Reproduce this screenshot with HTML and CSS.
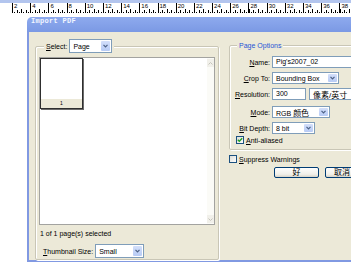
FILE: index.html
```html
<!DOCTYPE html>
<html lang="en">
<head>
    <meta charset="UTF-8">
    <title>Import PDF</title>
    <link rel="stylesheet" href="styles.css">
</head>
<body>
<div class="topbar"></div>
<div class="ruler">
    <span>2</span><span>4</span><span>6</span><span>8</span><span>10</span>
    <span>12</span><span>14</span><span>16</span><span>18</span><span>20</span>
    <span>22</span><span>24</span><span>26</span><span>28</span><span>30</span>
    <span>32</span><span>34</span><span>36</span><span>38</span>
</div>

<div class="stage">
<div class="dialog">
    <div class="titlebar">Import PDF</div>
    <div class="dialog-body">

        <fieldset class="group group-pages">
            <legend class="select-legend">
                <span><u>S</u>elect:</span>
                <div class="combo tall w-page">
                    <span class="combo-text">Page</span>
                    <span class="combo-btn"><svg width="5" height="4" viewBox="0 0 5 4"><path d="M0.5 0.8 L2.5 2.8 L4.5 0.8" fill="none" stroke="#4d6185" stroke-width="1.2"/></svg></span>
                </div>
            </legend>

            <div class="thumbs">
                <div class="thumb-area">
                    <div class="thumb">
                        <div class="thumb-page"></div>
                        <div class="thumb-num">1</div>
                    </div>
                </div>
                <div class="scrollbar">
                    <span class="scroll-btn"><svg width="5" height="3" viewBox="0 0 5 3"><path d="M0.5 2.5 L2.5 0.5 L4.5 2.5" fill="none" stroke="#c4c3ba" stroke-width="1"/></svg></span>
                    <span class="scroll-btn"><svg width="5" height="3" viewBox="0 0 5 3"><path d="M0.5 0.5 L2.5 2.5 L4.5 0.5" fill="none" stroke="#c4c3ba" stroke-width="1"/></svg></span>
                </div>
            </div>

            <p class="status">1 of 1 page(s) selected</p>

            <div class="size-row">
                <span><u>T</u>humbnail Size:</span>
                <div class="combo tall w-size">
                    <span class="combo-text">Small</span>
                    <span class="combo-btn"><svg width="5" height="4" viewBox="0 0 5 4"><path d="M0.5 0.8 L2.5 2.8 L4.5 0.8" fill="none" stroke="#4d6185" stroke-width="1.2"/></svg></span>
                </div>
            </div>
        </fieldset>

        <div class="right-col">
            <fieldset class="group group-opts">
                <legend class="opts-legend">Page Options</legend>

                <div class="opt-row">
                    <span class="opt-label"><u>N</u>ame:</span>
                    <div class="field w-name">Pig's2007_02</div>
                </div>
                <div class="opt-row">
                    <span class="opt-label"><u>C</u>rop To:</span>
                    <div class="combo w-crop">
                        <span class="combo-text">Bounding Box</span>
                        <span class="combo-btn"><svg width="5" height="4" viewBox="0 0 5 4"><path d="M0.5 0.8 L2.5 2.8 L4.5 0.8" fill="none" stroke="#4d6185" stroke-width="1.2"/></svg></span>
                    </div>
                </div>
                <div class="opt-row row-res">
                    <span class="opt-label"><u>R</u>esolution:</span>
                    <div class="field w-res">300</div>
                    <div class="combo w-unit">
                        <span class="combo-text cjk">像素/英寸</span>
                    </div>
                </div>
                <div class="opt-row row-mode">
                    <span class="opt-label"><u>M</u>ode:</span>
                    <div class="combo w-mode">
                        <span class="combo-text"><span>RGB&nbsp;<span class="cjk">颜色</span></span></span>
                        <span class="combo-btn"><svg width="5" height="4" viewBox="0 0 5 4"><path d="M0.5 0.8 L2.5 2.8 L4.5 0.8" fill="none" stroke="#4d6185" stroke-width="1.2"/></svg></span>
                    </div>
                </div>
                <div class="opt-row">
                    <span class="opt-label"><u>B</u>it Depth:</span>
                    <div class="combo w-bit">
                        <span class="combo-text">8 bit</span>
                        <span class="combo-btn"><svg width="5" height="4" viewBox="0 0 5 4"><path d="M0.5 0.8 L2.5 2.8 L4.5 0.8" fill="none" stroke="#4d6185" stroke-width="1.2"/></svg></span>
                    </div>
                </div>
                <div class="check-row anti">
                    <span class="checkbox"><svg width="6" height="6" viewBox="0 0 6 6"><path d="M0.8 2.8 L2.3 4.3 L5.2 1.2" fill="none" stroke="#21a121" stroke-width="1.4"/></svg></span>
                    <span><u>A</u>nti-aliased</span>
                </div>
            </fieldset>

            <div class="check-row suppress">
                <span class="checkbox"></span>
                <span><u>S</u>uppress Warnings</span>
            </div>

            <div class="buttons">
                <button class="btn btn-ok cjk">好</button>
                <button class="btn btn-cancel cjk">取消</button>
            </div>
        </div>

    </div>
</div>
</div>
</body>
</html>
```

FILE: styles.css
```css
html, body {
    margin: 0;
    padding: 0;
    overflow: hidden;
}
body {
    width: 351px;
    height: 267px;
    background: #fff;
    font-family: "Liberation Sans", Arial, sans-serif;
    font-size: 7px;
    color: #000;
}
.cjk {
    font-family: "Liberation Sans", "Noto Sans CJK SC", sans-serif;
    font-size: 8px;
}
u {
    text-decoration: underline;
}

/* ruler along the top */
.topbar {
    height: 3px;
    background: #b3c5ee;
}
.ruler {
    display: flex;
    height: 10px;
    padding-left: 12px;
    background-image:
        repeating-linear-gradient(to right, #000 0 1px, transparent 1px 9.1px),
        repeating-linear-gradient(to right, #000 0 1px, transparent 1px 4.55px),
        repeating-linear-gradient(to right, #000 0 1px, transparent 1px 2.275px);
    background-size: 100% 4px, 100% 3px, 100% 1px;
    background-position: 12px 100%, 12px 100%, 12px 100%;
    background-repeat: no-repeat;
}
.ruler span {
    flex: 0 0 18.2px;
    box-sizing: border-box;
    border-left: 1px solid #000;
    padding-left: 1px;
    font-size: 6px;
    line-height: 6px;
}

/* dialog */
.stage {
    padding: 4px 0 0 27px;
}
.dialog {
    width: 350px;
}
.titlebar {
    height: 15px;
    line-height: 15px;
    padding-left: 4px;
    border-top-left-radius: 5px;
    background: linear-gradient(#8eaaee, #7b99e4);
    color: #f2f6ff;
    font: bold 7px "Liberation Mono", monospace;
    letter-spacing: 0.3px;
}
.dialog-body {
    display: flex;
    align-items: flex-start;
    gap: 10px;
    height: 221px;
    padding: 7px 0 0 6px;
    background: #ece9d8;
    border-left: 2px solid #8199e2;
    border-bottom: 2px solid #8199e2;
}

.group {
    margin: 0;
    border: 1px solid #c9c6b6;
    border-radius: 2px;
    box-shadow: inset 1px 1px #fff, 1px 1px #fff;
}
.group legend {
    background: #ece9d8;
}

/* left: page thumbnails */
.group-pages {
    width: 184px;
    box-sizing: border-box;
    padding: 4px 3px 1px 3px;
}
.select-legend {
    display: flex;
    align-items: center;
    gap: 2px;
    margin-left: 5px;
    padding: 0 2px;
}
.thumbs {
    display: flex;
    width: 176px;
    height: 168px;
    box-sizing: border-box;
    border: 1px solid #a3a3a0;
    background: #fff;
}
.thumb-area {
    flex: 1;
}
.thumb {
    width: 43px;
    height: 51px;
    box-sizing: border-box;
    border: 1px solid #2e2e2e;
    display: flex;
    flex-direction: column;
    box-shadow: 1px 1px #6b6b6b;
}
.thumb-page {
    flex: 1;
    background: #fff;
}
.thumb-num {
    height: 9px;
    line-height: 9px;
    text-align: center;
    font-size: 5px;
    background: #ece9d8;
}
.scrollbar {
    width: 7px;
    display: flex;
    flex-direction: column;
    justify-content: space-between;
    padding: 1px 0;
    background: #fbfbf7;
}
.scroll-btn {
    height: 8px;
    display: flex;
    align-items: center;
    justify-content: center;
    background: #f1f0ea;
}
.status {
    margin: 4px 0 0 1px;
    line-height: 10px;
}
.size-row {
    display: flex;
    align-items: center;
    gap: 2px;
    margin: 5px 0 0 4px;
}

/* combos and fields */
.combo {
    display: flex;
    height: 12px;
    box-sizing: border-box;
    border: 1px solid #7f9db9;
    background: #fff;
}
.combo.tall {
    height: 14px;
}
.combo-text {
    flex: 1;
    padding-left: 3px;
    white-space: nowrap;
    overflow: hidden;
    display: flex;
    align-items: center;
}
.combo-btn {
    width: 9px;
    margin: 1px;
    border-radius: 1px;
    background: linear-gradient(#d3dffa, #b7cbf5);
    display: flex;
    align-items: center;
    justify-content: center;
}
.field {
    height: 12px;
    box-sizing: border-box;
    border: 1px solid #7f9db9;
    background: #fff;
    padding-left: 3px;
    line-height: 10px;
    white-space: nowrap;
}
.w-page { width: 43px; }
.w-size { width: 49px; }
.w-name { width: 90px; }
.w-crop { width: 67px; }
.w-res { width: 34px; }
.w-unit { width: 60px; margin-left: 3px; }
.w-mode { width: 58px; }
.w-bit { width: 43px; }

/* right: page options */
.right-col {
    width: 140px;
    margin-top: 2px;
}
.group-opts {
    padding: 6px 0 5px 0;
}
.opts-legend {
    margin-left: 7px;
    padding: 0 2px;
    color: #1f55d6;
    line-height: 9px;
}
.opt-row {
    display: flex;
    align-items: center;
    height: 12px;
    margin-top: 4px;
}
.opt-row:first-of-type {
    margin-top: 0;
}
.row-mode {
    margin-top: 6px;
}
.opt-label {
    width: 40px;
    margin-right: 2px;
    text-align: right;
    white-space: nowrap;
}
.check-row {
    display: flex;
    align-items: center;
    gap: 2px;
    height: 8px;
}
.anti {
    margin: 2px 0 0 6px;
}
.suppress {
    margin-top: 5px;
}
.checkbox {
    width: 8px;
    height: 8px;
    box-sizing: border-box;
    border: 1px solid #1c5180;
    background: linear-gradient(135deg, #dcdcd7, #fff);
    display: flex;
    align-items: center;
    justify-content: center;
}
.buttons {
    display: flex;
    gap: 6px;
    margin: 4px 0 0 45px;
}
.btn {
    height: 11px;
    padding: 0;
    border: 1px solid #003c74;
    border-radius: 2px;
    background: linear-gradient(#fefefe, #f0efe9 70%, #d8d4c8);
    line-height: 9px;
    color: #000;
}
.btn-ok {
    width: 45px;
}
.btn-cancel {
    width: 34px;
}
```
